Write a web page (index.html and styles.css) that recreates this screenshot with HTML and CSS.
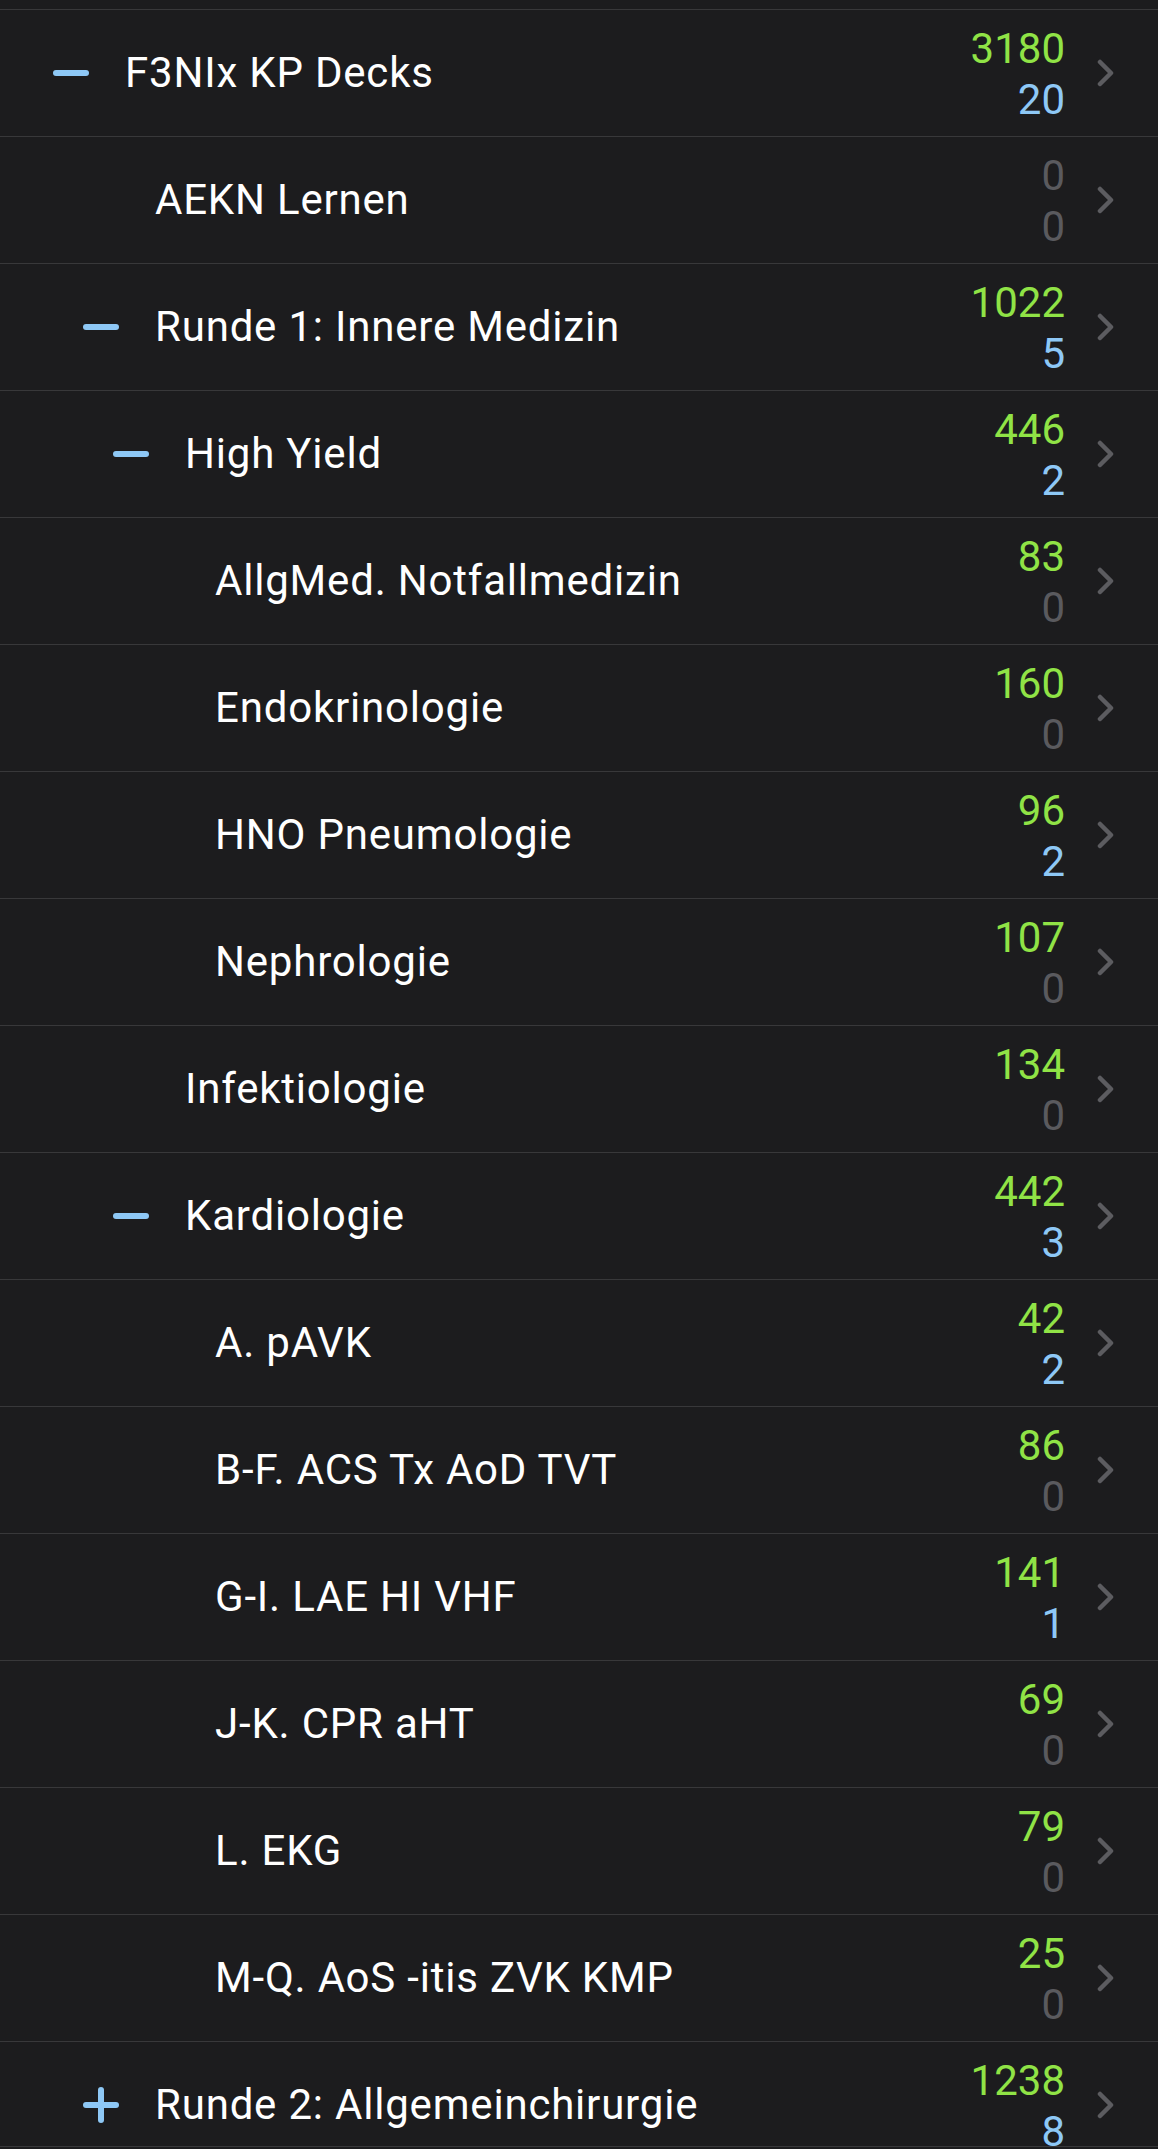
FILE: index.html
```html
<!DOCTYPE html>
<html lang="de">
<head>
<meta charset="utf-8">
<title>Decks</title>
<link rel="stylesheet" href="styles.css">
</head>
<body>
<div class="list">
  <div class="row lvl-0"><span class="toggle minus"></span><span class="name">F3NIx KP Decks</span><span class="counts"><span class="new">3180</span><span class="due">20</span></span><svg class="chev" viewBox="0 0 17 28"><path d="M3 3 L14 14 L3 25"/></svg></div>
  <div class="row lvl-1"><span class="toggle"></span><span class="name">AEKN Lernen</span><span class="counts"><span class="zero">0</span><span class="zero">0</span></span><svg class="chev" viewBox="0 0 17 28"><path d="M3 3 L14 14 L3 25"/></svg></div>
  <div class="row lvl-1"><span class="toggle minus"></span><span class="name">Runde 1: Innere Medizin</span><span class="counts"><span class="new">1022</span><span class="due">5</span></span><svg class="chev" viewBox="0 0 17 28"><path d="M3 3 L14 14 L3 25"/></svg></div>
  <div class="row lvl-2"><span class="toggle minus"></span><span class="name">High Yield</span><span class="counts"><span class="new">446</span><span class="due">2</span></span><svg class="chev" viewBox="0 0 17 28"><path d="M3 3 L14 14 L3 25"/></svg></div>
  <div class="row lvl-3"><span class="toggle"></span><span class="name">AllgMed. Notfallmedizin</span><span class="counts"><span class="new">83</span><span class="zero">0</span></span><svg class="chev" viewBox="0 0 17 28"><path d="M3 3 L14 14 L3 25"/></svg></div>
  <div class="row lvl-3"><span class="toggle"></span><span class="name">Endokrinologie</span><span class="counts"><span class="new">160</span><span class="zero">0</span></span><svg class="chev" viewBox="0 0 17 28"><path d="M3 3 L14 14 L3 25"/></svg></div>
  <div class="row lvl-3"><span class="toggle"></span><span class="name">HNO Pneumologie</span><span class="counts"><span class="new">96</span><span class="due">2</span></span><svg class="chev" viewBox="0 0 17 28"><path d="M3 3 L14 14 L3 25"/></svg></div>
  <div class="row lvl-3"><span class="toggle"></span><span class="name">Nephrologie</span><span class="counts"><span class="new">107</span><span class="zero">0</span></span><svg class="chev" viewBox="0 0 17 28"><path d="M3 3 L14 14 L3 25"/></svg></div>
  <div class="row lvl-2"><span class="toggle"></span><span class="name">Infektiologie</span><span class="counts"><span class="new">134</span><span class="zero">0</span></span><svg class="chev" viewBox="0 0 17 28"><path d="M3 3 L14 14 L3 25"/></svg></div>
  <div class="row lvl-2"><span class="toggle minus"></span><span class="name">Kardiologie</span><span class="counts"><span class="new">442</span><span class="due">3</span></span><svg class="chev" viewBox="0 0 17 28"><path d="M3 3 L14 14 L3 25"/></svg></div>
  <div class="row lvl-3"><span class="toggle"></span><span class="name">A. pAVK</span><span class="counts"><span class="new">42</span><span class="due">2</span></span><svg class="chev" viewBox="0 0 17 28"><path d="M3 3 L14 14 L3 25"/></svg></div>
  <div class="row lvl-3"><span class="toggle"></span><span class="name">B-F. ACS Tx AoD TVT</span><span class="counts"><span class="new">86</span><span class="zero">0</span></span><svg class="chev" viewBox="0 0 17 28"><path d="M3 3 L14 14 L3 25"/></svg></div>
  <div class="row lvl-3"><span class="toggle"></span><span class="name">G-I. LAE HI VHF</span><span class="counts"><span class="new">141</span><span class="due">1</span></span><svg class="chev" viewBox="0 0 17 28"><path d="M3 3 L14 14 L3 25"/></svg></div>
  <div class="row lvl-3"><span class="toggle"></span><span class="name">J-K. CPR aHT</span><span class="counts"><span class="new">69</span><span class="zero">0</span></span><svg class="chev" viewBox="0 0 17 28"><path d="M3 3 L14 14 L3 25"/></svg></div>
  <div class="row lvl-3"><span class="toggle"></span><span class="name">L. EKG</span><span class="counts"><span class="new">79</span><span class="zero">0</span></span><svg class="chev" viewBox="0 0 17 28"><path d="M3 3 L14 14 L3 25"/></svg></div>
  <div class="row lvl-3"><span class="toggle"></span><span class="name">M-Q. AoS -itis ZVK KMP</span><span class="counts"><span class="new">25</span><span class="zero">0</span></span><svg class="chev" viewBox="0 0 17 28"><path d="M3 3 L14 14 L3 25"/></svg></div>
  <div class="row lvl-1"><span class="toggle plus"></span><span class="name">Runde 2: Allgemeinchirurgie</span><span class="counts"><span class="new">1238</span><span class="due">8</span></span><svg class="chev" viewBox="0 0 17 28"><path d="M3 3 L14 14 L3 25"/></svg></div>
</div>
<div class="bottom-bar"></div>
</body>
</html>
```
FILE: styles.css
```css
html, body {
  margin: 0;
  padding: 0;
  background: #1c1c1e;
}
body {
  font-family: Roboto, "Liberation Sans", sans-serif;
  color: #ffffff;
  height: 2149px;
  overflow: hidden;
  position: relative;
}
.list {
  padding-top: 9px;
}
.row {
  display: flex;
  align-items: center;
  height: 126px;
  border-top: 1px solid #38383a;
  padding-right: 44px;
  box-sizing: content-box;
}
.lvl-0 { padding-left: 53px; }
.lvl-1 { padding-left: 83px; }
.lvl-2 { padding-left: 113px; }
.lvl-3 { padding-left: 143px; }
.toggle {
  flex: 0 0 36px;
  height: 36px;
  margin-right: 36px;
  position: relative;
}
.toggle.minus::before,
.toggle.plus::before,
.toggle.plus::after {
  content: "";
  position: absolute;
  background: #8ec8f6;
  border-radius: 3px;
}
.toggle.minus::before,
.toggle.plus::before {
  left: 0;
  right: 0;
  top: 15px;
  height: 6px;
}
.toggle.plus::after {
  top: 0;
  bottom: 0;
  left: 15px;
  width: 6px;
}
.name {
  flex: 1 1 auto;
  font-size: 42px;
  letter-spacing: 0.8px;
  line-height: 50px;
  white-space: nowrap;
}
.counts {
  display: flex;
  flex-direction: column;
  align-items: flex-end;
  font-size: 42px;
  line-height: 51px;
  padding-top: 2px;
  margin-right: 32px;
  letter-spacing: 0;
}
.new { color: #90e346; }
.due { color: #8ec8f6; }
.zero { color: #5a5a5e; }
.chev {
  width: 17px;
  height: 28px;
  flex: 0 0 17px;
}
.chev path {
  fill: none;
  stroke: #5c5c60;
  stroke-width: 4.5;
  stroke-linecap: round;
  stroke-linejoin: round;
}
.bottom-bar {
  position: absolute;
  left: 0;
  right: 0;
  top: 2146px;
  height: 3px;
  border-top: 1px solid #38383a;
  background: #1c1c1e;
  box-sizing: border-box;
}
```
